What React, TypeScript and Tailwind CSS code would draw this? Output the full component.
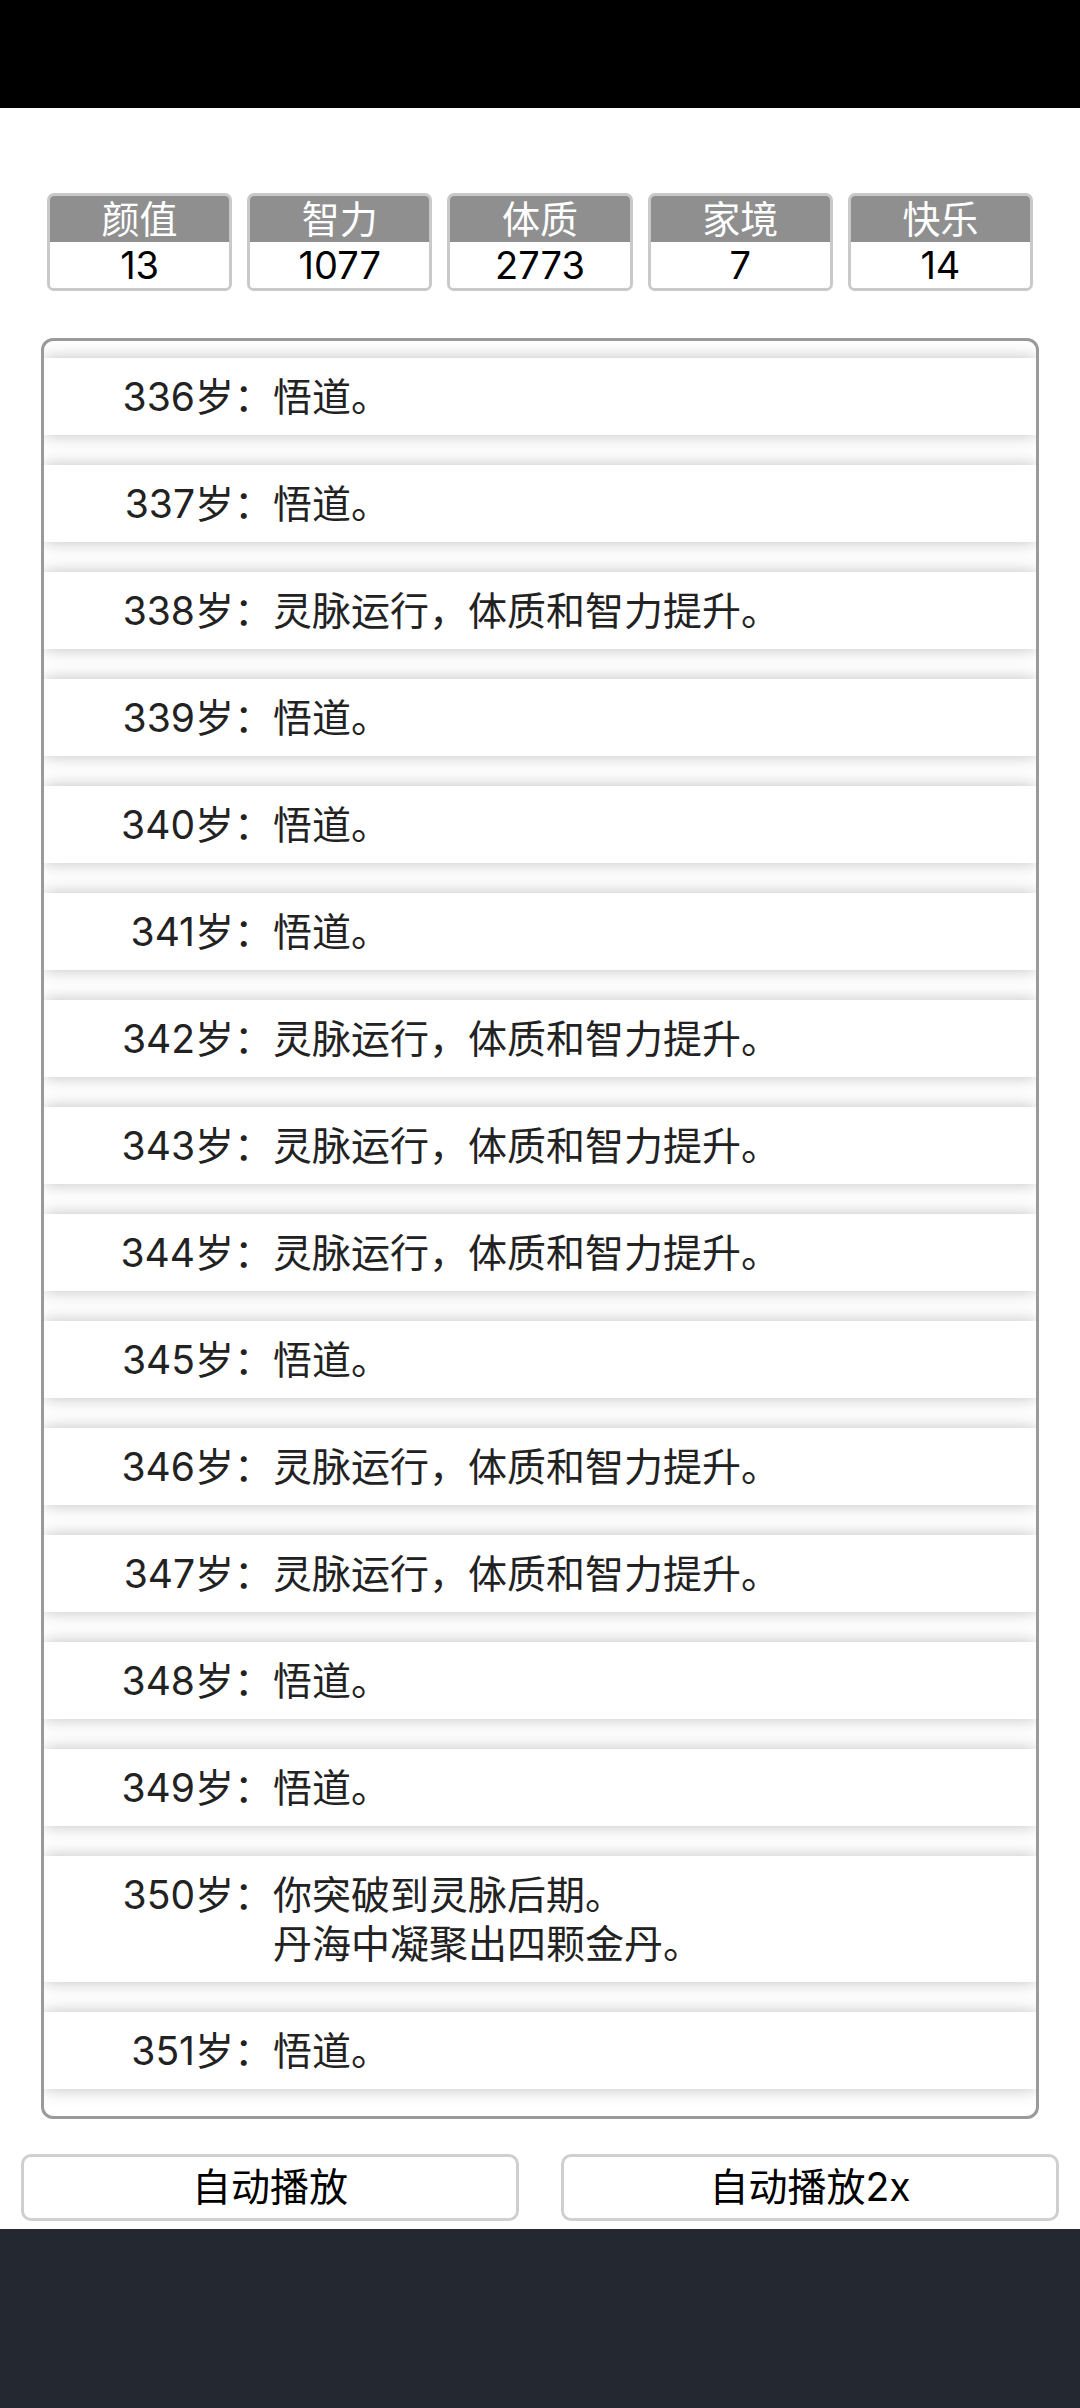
const stats = [
  { label: "颜值", value: 13 },
  { label: "智力", value: 1077 },
  { label: "体质", value: 2773 },
  { label: "家境", value: 7 },
  { label: "快乐", value: 14 },
];

const GROW = "灵脉运行，体质和智力提升。";
const WU = "悟道。";

const events: { age: number; lines: string[] }[] = [
  { age: 336, lines: [WU] },
  { age: 337, lines: [WU] },
  { age: 338, lines: [GROW] },
  { age: 339, lines: [WU] },
  { age: 340, lines: [WU] },
  { age: 341, lines: [WU] },
  { age: 342, lines: [GROW] },
  { age: 343, lines: [GROW] },
  { age: 344, lines: [GROW] },
  { age: 345, lines: [WU] },
  { age: 346, lines: [GROW] },
  { age: 347, lines: [GROW] },
  { age: 348, lines: [WU] },
  { age: 349, lines: [WU] },
  { age: 350, lines: ["你突破到灵脉后期。", "丹海中凝聚出四颗金丹。"] },
  { age: 351, lines: [WU] },
];

export default function App() {
  return (
    <div className="flex h-[2408px] w-[1080px] flex-col bg-white font-['Inter','Noto_Sans_CJK_SC',sans-serif]">
      {/* status bar */}
      <div className="h-[108px] bg-black" />

      {/* attribute boxes */}
      <div className="mt-[85px] flex gap-[15px] px-[47px]">
        {stats.map((s) => (
          <div
            key={s.label}
            className="flex flex-1 flex-col overflow-hidden rounded-[7px] border-[3px] border-[#c9c9c9]"
          >
            <div className="flex h-[46px] items-center justify-center bg-[#8f8f8f] text-[38px] leading-none text-white">
              {s.label}
            </div>
            <div className="flex h-[46px] items-center justify-center bg-white text-[38px] leading-none text-black">
              {s.value}
            </div>
          </div>
        ))}
      </div>

      {/* life trajectory */}
      <div className="mx-[41px] mt-[47px] overflow-hidden rounded-[12px] border-[3px] border-[#9a9a9a] bg-white">
        <ul className="flex flex-col gap-[30px] pt-[17px] pb-[27px]">
          {events.map((e) => (
            <li
              key={e.age}
              className="flex bg-white py-[14px] text-[39px] leading-[49px] text-[#222] shadow-[0_0_16px_rgba(0,0,0,0.25)]"
            >
              <span className="w-[229px] shrink-0 text-right">{e.age}岁：</span>
              <span className="flex flex-col">
                {e.lines.map((l) => (
                  <span key={l}>{l}</span>
                ))}
              </span>
            </li>
          ))}
        </ul>
      </div>

      {/* controls */}
      <div className="mt-[35px] flex gap-[42px] px-[21px]">
        <button className="flex h-[67px] flex-1 items-center justify-center rounded-[10px] border-[3px] border-[#cfcfcf] bg-white text-[39px] text-black">
          自动播放
        </button>
        <button className="flex h-[67px] flex-1 items-center justify-center rounded-[10px] border-[3px] border-[#cfcfcf] bg-white text-[39px] text-black">
          自动播放2x
        </button>
      </div>

      <div className="mt-[8px] flex-1 bg-[#232831]" />
    </div>
  );
}
